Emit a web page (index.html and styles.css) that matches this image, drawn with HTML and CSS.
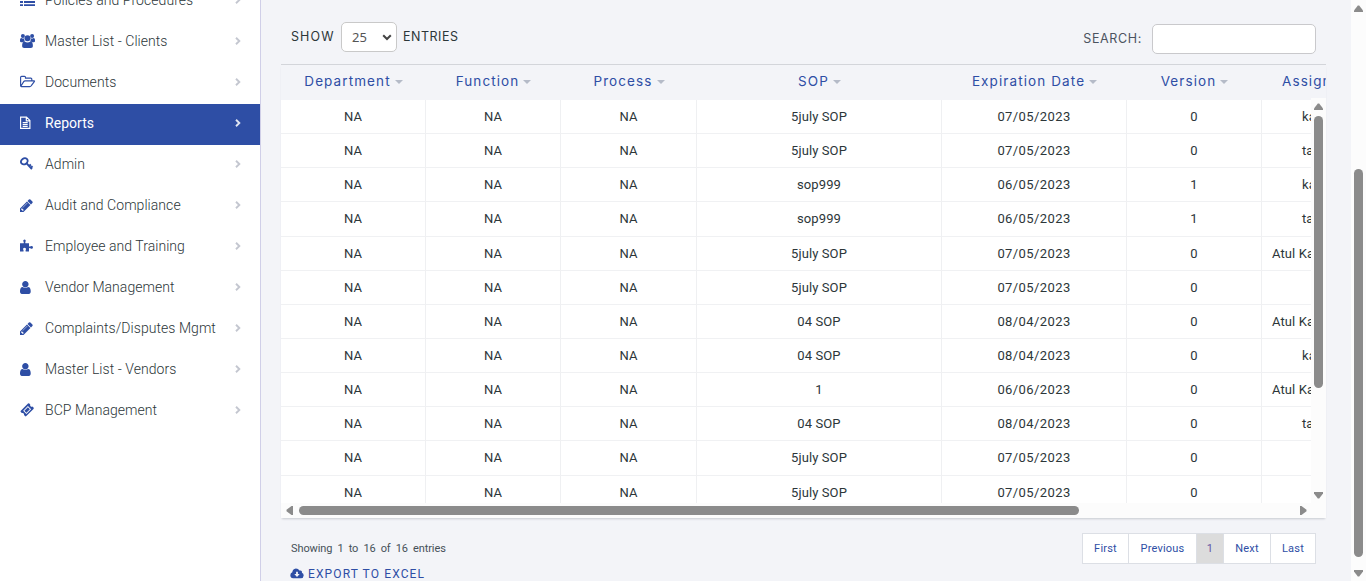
FILE: index.html
```html
<!DOCTYPE html>
<html lang="en">
<head>
<meta charset="utf-8">
<title>Reports</title>
<link rel="stylesheet" href="styles.css">
</head>
<body>
<svg class="defs" width="0" height="0">
  <symbol id="user" viewBox="0 0 1792 1792"><path d="M1536 1399q0 109-62.5 187t-150.5 78h-854q-88 0-150.5-78t-62.5-187q0-85 8.5-160.5t31.5-152 58.5-131 94-89 134.5-34.5q131 128 313 128t313-128q76 0 134.5 34.5t94 89 58.5 131 31.5 152 8.5 160.5zm-256-887q0 159-112.5 271.5t-271.5 112.5-271.5-112.5-112.5-271.5 112.5-271.5 271.5-112.5 271.5 112.5 112.5 271.5z" transform="translate(-256 0)"/></symbol>
  <symbol id="pencil" viewBox="0 0 1792 1792"><path transform="translate(-128 0)" d="M491 1536l91-91-235-235-91 91v107h128v128h107zm523-928q0-22-22-22-10 0-17 7l-542 542q-7 7-7 17 0 22 22 22 10 0 17-7l542-542q7-7 7-17zm-54-192l416 416-832 832h-416v-416zm683 96q0 53-37 90l-166 166-416-416 166-165q36-38 90-38 53 0 91 38l235 234q37 39 37 91z"/></symbol>
  <symbol id="chev" viewBox="0 0 6 8"><path d="M1 .8 4.3 4 1 7.2" fill="none" stroke="currentColor" stroke-width="1.9"/></symbol>
</svg>
<div class="app">
  <nav class="side">
    <a class="item"><svg class="ico" viewBox="0 0 16 16"><path d="M0 2h3v2H0zM4 2h11v2H4zM0 5.5h3v2H0zM4 5.5h11v2H4zM0 9h3v2H0zM4 9h11v2H4zM0 12.3h3v1.6H0zM4 12.3h11v1.6H4z"/></svg><span>Policies and Procedures</span><svg class="chev"><use href="#chev"/></svg></a>
    <a class="item"><svg class="ico" viewBox="0 0 16 16"><circle cx="2.9" cy="3" r="2"/><circle cx="12.1" cy="3" r="2"/><circle cx="7.5" cy="5.2" r="3"/><path d="M0 8.3V6.8Q0 5 1.4 5q1.5.8 2.6.4Q4 7.2 4.9 8.2q-1.3 0-2 1H1.4Q0 9.200 0 8.300zM15 8.300V6.800Q15 5 13.600 5q-1.500.8-2.600.4Q11 7.200 10.100 8.200q1.300 0 2 1h1.500q1.400 0 1.400-.9zM2.100 13.200Q2.100 8.600 4.600 8.600q2.900 2 5.800 0 2.500 0 2.500 4.600 0 1.800-2 1.800H4.100q-2 0-2-1.800z"/></svg><span>Master List - Clients</span><svg class="chev"><use href="#chev"/></svg></a>
    <a class="item"><svg class="ico" viewBox="0 0 16 16"><path class="line" d="M.6 12V3.300q0-1 1-1h2.900q1 0 1 1v.8h5.300q1 0 1 1v1.600M.7 12.500l3-4.900q.5-.8 1.400-.8h8.900q.9 0 .3.800l-3 4.100q-.6.900-1.600.900H1.400q-.8 0-.8-.8"/></svg><span>Documents</span><svg class="chev"><use href="#chev"/></svg></a>
    <a class="item active"><svg class="ico" viewBox="0 0 16 16"><path class="line" d="M.6 2.100h5.900l3.400 3.300v8H.6zM6.300 2.300v3.500h3.500M2.700 7.600h5M2.700 9.500h5M2.700 11.400h5"/></svg><span>Reports</span><svg class="chev"><use href="#chev"/></svg></a>
    <a class="item"><svg class="ico" viewBox="0 0 16 16"><ellipse class="key" cx="4.300" cy="5.300" rx="3.500" ry="2.900" transform="rotate(-35 4.300 5.300)"/><path class="key" d="M6.400 7.100l5.500 6.100M9 10l1.900-1.600M10.600 11.900l2-1.700"/></svg><span>Admin</span><svg class="chev"><use href="#chev"/></svg></a>
    <a class="item"><svg class="ico sm"><use href="#pencil"/></svg><span>Audit and Compliance</span><svg class="chev"><use href="#chev"/></svg></a>
    <a class="item"><svg class="ico" viewBox="0 0 16 16"><path d="M0 5.200h3.700Q4.100 4.300 3.500 3.700q-.9-1.900.9-2.200 1.900.2 1.200 2.100-.6.900-.2 1.600H9v3.200q.8.500 1.600-.2 2.200-.7 2.400 1.200-.3 1.900-2.300 1.100-.8-.8-1.700-.2v3.200H5.700q-.5-1 .2-1.800.5-1.900-1.400-2-1.900.1-1.300 2 .7.800.3 1.800H0z"/></svg><span>Employee and Training</span><svg class="chev"><use href="#chev"/></svg></a>
    <a class="item"><svg class="ico sm"><use href="#user"/></svg><span>Vendor Management</span><svg class="chev"><use href="#chev"/></svg></a>
    <a class="item"><svg class="ico sm"><use href="#pencil"/></svg><span>Complaints/Disputes Mgmt</span><svg class="chev"><use href="#chev"/></svg></a>
    <a class="item"><svg class="ico sm"><use href="#user"/></svg><span>Master List - Vendors</span><svg class="chev"><use href="#chev"/></svg></a>
    <a class="item"><svg class="ico" viewBox="0 0 16 16"><path fill-rule="evenodd" d="M.8 8.800 8 1.600q.7-.6 1.300 0l.9.9q-.3 1.500.6 2 .8.6 1.700.1l1 1q.6.600 0 1.300l-7.200 7.200q-.7.600-1.300 0l-1-1q.3-1.300-.6-1.900-.7-.5-1.600-.1l-1-1q-.6-.6 0-1.300zM3.200 8.800l3.200 3.200 4.700-4.700-3.200-3.200zM4.400 8.800l3.500-3.500 2 2-3.500 3.500z"/></svg><span>BCP Management</span><svg class="chev"><use href="#chev"/></svg></a>
  </nav>
  <main class="main">
    <div class="tools">
      <label class="show"><span class="t-show">SHOW</span><span class="select"><span>25</span><svg width="10" height="7" viewBox="0 0 10 7"><path d="M1.200 1.200 5 5l3.800-3.800" fill="none" stroke="#444" stroke-width="2"/></svg></span><span class="t-entries">ENTRIES</span></label>
      <label class="search"><span>SEARCH:</span><input type="text"></label>
    </div>
    <div class="grid">
      <div class="row head"><b>Department<i></i></b><b>Function<i></i></b><b>Process<i></i></b><b>SOP<i></i></b><b>Expiration Date<i></i></b><b>Version<i></i></b><b class="last">Assign</b></div>
      <div class="scroll">
        <div class="rows">
          <div class="row"><p>NA</p><p>NA</p><p>NA</p><p>5july SOP</p><p class="d">07/05/2023</p><p>0</p><p class="k">ka</p></div>
          <div class="row"><p>NA</p><p>NA</p><p>NA</p><p>5july SOP</p><p class="d">07/05/2023</p><p>0</p><p class="k">ta</p></div>
          <div class="row"><p>NA</p><p>NA</p><p>NA</p><p>sop999</p><p class="d">06/05/2023</p><p>1</p><p class="k">ka</p></div>
          <div class="row"><p>NA</p><p>NA</p><p>NA</p><p>sop999</p><p class="d">06/05/2023</p><p>1</p><p class="k">ta</p></div>
          <div class="row"><p>NA</p><p>NA</p><p>NA</p><p>5july SOP</p><p class="d">07/05/2023</p><p>0</p><p class="a">Atul Ka</p></div>
          <div class="row"><p>NA</p><p>NA</p><p>NA</p><p>5july SOP</p><p class="d">07/05/2023</p><p>0</p><p></p></div>
          <div class="row"><p>NA</p><p>NA</p><p>NA</p><p>04 SOP</p><p class="d">08/04/2023</p><p>0</p><p class="a">Atul Ka</p></div>
          <div class="row"><p>NA</p><p>NA</p><p>NA</p><p>04 SOP</p><p class="d">08/04/2023</p><p>0</p><p class="k">ka</p></div>
          <div class="row"><p>NA</p><p>NA</p><p>NA</p><p>1</p><p class="d">06/06/2023</p><p>0</p><p class="a">Atul Ka</p></div>
          <div class="row"><p>NA</p><p>NA</p><p>NA</p><p>04 SOP</p><p class="d">08/04/2023</p><p>0</p><p class="k">ta</p></div>
          <div class="row"><p>NA</p><p>NA</p><p>NA</p><p>5july SOP</p><p class="d">07/05/2023</p><p>0</p><p></p></div>
          <div class="row"><p>NA</p><p>NA</p><p>NA</p><p>5july SOP</p><p class="d">07/05/2023</p><p>0</p><p></p></div>
        </div>
        <div class="vbar"><svg width="9" height="7"><path d="M0 7V5.500L3.800.5h1.400L9 5.500V7z"/></svg><div class="thumb v1"></div><svg class="end" width="9" height="7"><path d="M0 0v1.500l3.800 5h1.400l3.800-5V0z"/></svg></div>
        <div class="hbar"><svg width="7" height="9"><path d="M7 0H5.500L.5 3.800v1.400l5 3.800H7z"/></svg><div class="thumb h1"></div><svg class="end" width="7" height="9"><path d="M0 0h1.500l5 3.800v1.400l-5 3.800H0z"/></svg></div>
      </div>
    </div>
    <div class="foot">
      <span class="info">Showing 1 to 16 of 16 entries</span>
      <div class="pages"><a class="p1">First</a><a class="p2">Previous</a><a class="p3">1</a><a class="p4">Next</a><a class="p5">Last</a></div>
    </div>
    <a class="export"><svg width="14" height="11" viewBox="0 0 14 11"><path fill-rule="evenodd" d="M3.200 10.200Q.4 10 .3 7.200.4 5 2.300 4.300 2.400.9 5.900.4q2.500 0 3.500 2.200 1.800-.7 2.500.9.200.6 0 1.200 1.800.6 1.800 2.700-.2 2.600-2.800 2.800zM6.100 3.800v2.300H4.300L7 8.900l2.700-2.800H7.900V3.800z"/></svg><span>EXPORT TO EXCEL</span></a>
  </main>
  <div class="pagebar"><svg width="9" height="7"><path d="M0 7V5.500L3.800.5h1.400L9 5.500V7z"/></svg><div class="thumb v2"></div><svg class="end" width="9" height="7"><path d="M0 0v1.500l3.800 5h1.400l3.800-5V0z"/></svg></div>
</div>
</body>
</html>
```
FILE: styles.css
```css
* { box-sizing: border-box; }
body { margin: 0; height: 581px; overflow: hidden; background: #f3f4f8; font-family: Roboto, "Liberation Sans", sans-serif; color: #2c3639; }
p { margin: 0; }
.defs { display: block; }
.app { display: flex; height: 581px; overflow: hidden; }
.side { width: 261px; flex: none; background: #fff; border-right: 1px solid #d0cfe8; overflow: hidden; }
.item { display: flex; align-items: center; height: 41px; padding: 0 19px 3px 20px; font-size: 14px; font-weight: 300; line-height: 20px; color: #2c3639; white-space: nowrap; }
.item:first-child { margin-top: -19px; }
.item span { flex: 1; letter-spacing: .05px; }
.ico { width: 16px; height: 16px; flex: none; margin-right: 9px; fill: #2e4ea5; color: #2e4ea5; }
.ico.sm { width: 15px; height: 15px; margin-right: 10px; }
.line { fill: none; stroke: currentColor; stroke-width: 1.15; }
.key { fill: none; stroke: currentColor; stroke-width: 1.900; }
.chev { width: 6px; height: 8px; flex: none; color: #c4c7d0; }
.item.active { background: #2e4ea5; color: #fff; font-weight: 400; }
.active .ico, .active .chev { color: #fff; }
.active .chev { opacity: .85; }

.main { width: 1065px; flex: none; padding: 22px 0 0 20px; }
.tools { display: flex; justify-content: space-between; align-items: flex-start; height: 42px; padding: 0 10px; font-family: Inter, sans-serif; font-size: 12.500px; color: #2c3639; }
.show { display: flex; align-items: center; height: 30px; }
.t-show, .t-entries, .search span { padding-bottom: 2px; }
.t-show { width: 50px; letter-spacing: 1.100px; }
.t-entries { letter-spacing: .500px; }
.select { display: flex; align-items: center; justify-content: space-between; width: 56px; height: 30px; margin-right: 6px; padding: 0 4px 0 10px; border: 1px solid #c9c9c9; border-radius: 5px; background: #fff; font: 13px "Noto Sans", sans-serif; color: #555; }
.search { display: flex; align-items: center; gap: 10px; height: 30px; margin-top: 2px; letter-spacing: .650px; color: #4b535f; }
.search input { width: 164px; height: 30px; border: 1px solid #c9c9cc; border-radius: 5px; background: #fff; }

.grid { width: 1045px; border-top: 1px solid #d3d5da; overflow: hidden; box-shadow: 0 2px 2px -1px #c8cad0; }
.row { display: grid; grid-template-columns: 145px 135px 136px 245px 185px 135px 120px; height: 34.150px; }
.head { height: 33px; font: 13.500px Inter, sans-serif; color: #2e4ea5; letter-spacing: 1.100px; }
.head b { display: flex; align-items: center; justify-content: center; gap: 4px; padding-bottom: 1px; font-weight: 400; white-space: nowrap; }
.head i { border: 4px solid transparent; border-top-color: #b5bbc8; border-bottom: 0; margin-top: 1px; }
.head .last { justify-content: flex-start; padding-left: 20px; }
.scroll { display: grid; grid-template: 405px 15px / 1030px 15px; background: #fcfcfc; }
.rows { overflow: hidden; background: #fff; border-top: 2px solid #f3f4f8; }
.rows p { display: flex; align-items: center; justify-content: center; border-right: 1px solid #eff0f2; border-bottom: 1px solid #f0f1f3; font-size: 13px; letter-spacing: .100px; white-space: nowrap; }
.rows .d { letter-spacing: .400px; }
.rows .k { justify-content: flex-start; padding-left: 40px; }
.rows .a { justify-content: flex-start; padding-left: 10px; }
.vbar, .pagebar { display: flex; flex-direction: column; align-items: center; background: #fcfcfc; fill: #8b8b8b; }
.vbar { padding: 5px 0 4px; }
.hbar { display: flex; align-items: center; padding: 0 4px 0 5px; fill: #8b8b8b; }
.thumb { background: #8b8b8b; border-radius: 5px; }
.v1 { width: 9px; height: 272px; margin-top: 6px; }
.v2 { width: 9px; height: 388px; margin-top: 157px; }
.h1 { width: 780px; height: 9px; margin-left: 6px; }
.vbar .end, .pagebar .end { margin-top: auto; }
.hbar .end { margin-left: auto; }
.pagebar { width: 15px; margin-left: auto; padding: 5px 0 4px; }

.foot { display: flex; align-items: flex-start; justify-content: space-between; padding: 15px 10px 0; height: 48px; }
.info { font-size: 11px; line-height: 31px; word-spacing: 2.500px; letter-spacing: -.100px; color: #465158; }
.pages { display: flex; height: 31px; border: 1px solid #dcdfe5; background: #fff; font-size: 11px; line-height: 29px; color: #2e4ea5; text-align: center; letter-spacing: .200px; }
.pages a { border-right: 1px solid #dcdfe5; }
.p1 { width: 46px; } .p2 { width: 68px; } .p4 { width: 47px; } .pages .p5 { width: 44px; border: 0; }
.pages .p3 { width: 27px; background: #dcdcdc; color: #6457a5; }
.export { display: flex; align-items: center; gap: 4px; height: 14px; padding-left: 9px; font-size: 12px; letter-spacing: 1.120px; color: #2e4ea5; fill: #2e4ea5; }
.export span { padding-top: 1px; }
```
